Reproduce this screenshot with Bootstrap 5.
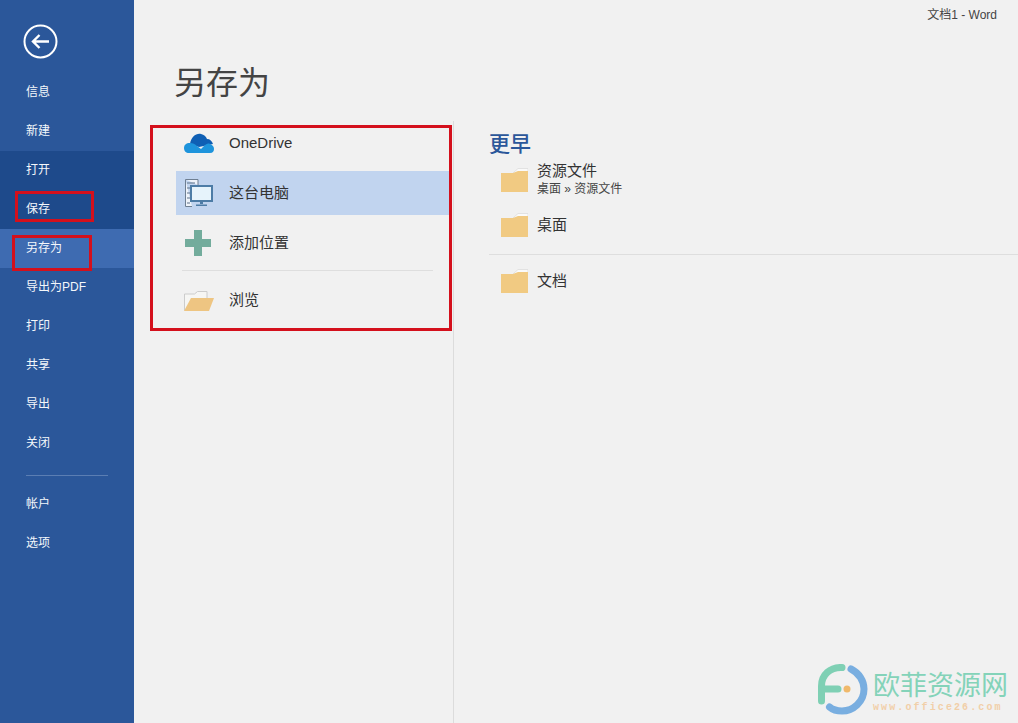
<!DOCTYPE html>
<html lang="zh">
<head>
<meta charset="utf-8">
<title>另存为</title>
<link rel="stylesheet" href="https://cdn.jsdelivr.net/npm/bootstrap@5.3.0/dist/css/bootstrap.min.css">
<style>
html,body{height:723px;overflow:hidden}
body{background:#f1f1f1;color:#333;font-family:"Liberation Sans","Noto Sans CJK SC",sans-serif;position:relative}
.shell{height:723px}
.side{width:134px;background:#2b579a;color:#fff;font-size:12px;padding-top:24px}
.back-ico{display:block;margin-left:23px;margin-bottom:14px}
.side-item{height:39px;line-height:39px;padding-left:26px;color:#f4f7fb;text-decoration:none;display:block}
.side-item.dim{background:#1e4a8b}
.side-item.on{background:#3e6bb1}
.side-rule{height:1px;background:#5b7eb3;margin:12px 26px 9px;opacity:1;border:0}
.pane{min-width:0}
.win-title{height:30px;line-height:30px;font-size:12px;color:#444;text-align:right;padding-right:21px}
.page-title{font-size:32px;line-height:48px;color:#444;margin:29px 0 14px 40px;font-weight:400}
.left-col{width:320px;border-right:1px solid #dcdcdc;padding:0 4px 0 42px;flex:none}
.place{height:44px;padding-left:8px;gap:15px;font-size:15px;color:#333}
.place+.place{margin-top:6px}
.place.sel{background:#c1d4ef}
.place-ico{width:30px;flex:none;display:block}
.left-rule{height:1px;background:#dedede;border:0;opacity:1;margin:5px 16px 7px 6px}
.right-col{padding-left:35px;padding-top:9px}
.recent-head{font-size:21px;line-height:28px;color:#2b579a;margin:0}
.recent{height:44px;padding-left:12px;gap:9px;font-size:15px;color:#333;line-height:18px}
.recent+.recent{margin-top:1px}
.recent small{display:block;font-size:12px;line-height:18px;color:#444}
.right-rule{height:1px;background:#dedede;border:0;opacity:1;margin:7px 0 4px}
.mark-box{position:absolute;border:3px solid #d4101c;pointer-events:none}
.box-a{left:15px;top:191px;width:79px;height:31px}
.box-b{left:12px;top:235px;width:80px;height:36px}
.box-c{left:150px;top:125px;width:302px;height:206px}
.wm{position:absolute;left:818px;top:664px;gap:5px}
.wm-cn{font-size:27px;line-height:29px;color:#84d3b9;letter-spacing:0;margin-top:8px}
.wm-en{font-size:10px;line-height:12px;font-weight:700;color:#f1cfa8;letter-spacing:2.1px;font-family:"Liberation Mono",monospace;margin-top:1px}
</style>
</head>
<body>
<div class="shell d-flex">
  <nav class="side flex-shrink-0">
    <svg class="back-ico" width="35" height="35" viewBox="0 0 35 35"><circle cx="17.5" cy="17.5" r="16" fill="none" stroke="#fff" stroke-width="2"/><path d="M26 17.5H10M16.5 11l-6.5 6.5 6.5 6.5" fill="none" stroke="#fff" stroke-width="2.4"/></svg>
    <a class="side-item" href="#">信息</a>
    <a class="side-item mb-0" href="#">新建</a>
    <a class="side-item dim" href="#">打开</a>
    <a class="side-item dim" href="#">保存</a>
    <a class="side-item on" href="#">另存为</a>
    <a class="side-item" href="#">导出为PDF</a>
    <a class="side-item" href="#">打印</a>
    <a class="side-item" href="#">共享</a>
    <a class="side-item" href="#">导出</a>
    <a class="side-item" href="#">关闭</a>
    <hr class="side-rule">
    <a class="side-item" href="#">帐户</a>
    <a class="side-item" href="#">选项</a>
  </nav>
  <main class="pane flex-grow-1 d-flex flex-column">
    <div class="win-title">文档1 - Word</div>
    <h1 class="page-title">另存为</h1>
    <div class="d-flex flex-grow-1">
      <div class="left-col">
        <div class="place d-flex align-items-center">
          <svg class="place-ico" height="24" viewBox="0 0 30 24"><path d="M6 13C7 6 12 2 17 3c3 .5 5 2.5 6 5 3 0 5 2 6 5l-14 3z" fill="#0f5fb4"/><path d="M5 22c-3 0-5-2-5-5 0-3 2-5 6-5 3 0 5 1 7 3l4 3 3-3c2-2 4-3 6-2 3 1 4 3 4 5s-1 4-4 4z" fill="#1e94dc"/></svg>
          <span>OneDrive</span>
        </div>
        <div class="place sel d-flex align-items-center">
          <svg class="place-ico" height="30" viewBox="0 0 30 30"><path d="M1.500 1.500H14V7M1.500 1.500V28.500H8" fill="#eef3fa" stroke="#6f7f92" stroke-width="1"/><path d="M3 5h8M3 10h3M3 15h3M3 20h3M3 25h3" stroke="#5f7388" stroke-width="1.200"/><rect x="7" y="8" width="21" height="15" fill="#e6f3fb" stroke="#4d7ca6" stroke-width="2"/><path d="M16 23h3v3h-3zM12 26.500h11v1.500H12z" fill="#4d7ca6"/></svg>
          <span>这台电脑</span>
        </div>
        <div class="place d-flex align-items-center">
          <svg class="place-ico" height="26" viewBox="0 0 30 26"><path d="M10 0h8v9h9v8h-9v9h-8v-9H1V9h9z" fill="#73ac9c"/></svg>
          <span>添加位置</span>
        </div>
        <hr class="left-rule">
        <div class="place d-flex align-items-center">
          <svg class="place-ico" height="22" viewBox="0 0 30 22"><path d="M.5 21.500V5h10l3-2.500 H23V9" fill="#f6f6f4" stroke="#ccc" stroke-width="1"/><path d="M7 9h23l-5 13H0z" fill="#eec582"/></svg>
          <span>浏览</span>
        </div>
      </div>
      <div class="right-col flex-grow-1">
        <h2 class="recent-head">更早</h2>
        <div class="recent d-flex align-items-center">
          <svg width="27" height="24" viewBox="0 0 27 24"><path d="M12 5 L17 .5H27V8H12z" fill="#fafafa" stroke="#ddd" stroke-width=".8"/><path d="M0 5H12L17 3H27V24H0z" fill="#f1ca82"/></svg>
          <div>资源文件<small>桌面 » 资源文件</small></div>
        </div>
        <div class="recent d-flex align-items-center">
          <svg width="27" height="24" viewBox="0 0 27 24"><path d="M12 5 L17 .5H27V8H12z" fill="#fafafa" stroke="#ddd" stroke-width=".8"/><path d="M0 5H12L17 3H27V24H0z" fill="#f1ca82"/></svg>
          <div>桌面</div>
        </div>
        <hr class="right-rule">
        <div class="recent d-flex align-items-center">
          <svg width="27" height="24" viewBox="0 0 27 24"><path d="M12 5 L17 .5H27V8H12z" fill="#fafafa" stroke="#ddd" stroke-width=".8"/><path d="M0 5H12L17 3H27V24H0z" fill="#f1ca82"/></svg>
          <div>文档</div>
        </div>
      </div>
    </div>
  </main>
</div>
<div class="mark-box box-a"></div>
<div class="mark-box box-b"></div>
<div class="mark-box box-c"></div>
<div class="wm d-flex">
  <svg width="50" height="52" viewBox="0 0 50 52"><path d="M24 3.500C12 3 3.500 11 3.500 22V37M3.500 25H20" fill="none" stroke="#7fd0b4" stroke-width="7" stroke-linecap="round"/><path d="M33 5C41 9 46 17 46 25 46 38 35 47 24 47 19 47 15 46 11.500 43" fill="none" stroke="#79aee0" stroke-width="7" stroke-linecap="round"/><circle cx="29" cy="25" r="3.500" fill="#f0b96b"/></svg>
  <div>
    <div class="wm-cn">欧菲资源网</div>
    <div class="wm-en">www.office26.com</div>
  </div>
</div>
<script src="https://cdn.jsdelivr.net/npm/bootstrap@5.3.0/dist/js/bootstrap.bundle.min.js"></script>
</body>
</html>
